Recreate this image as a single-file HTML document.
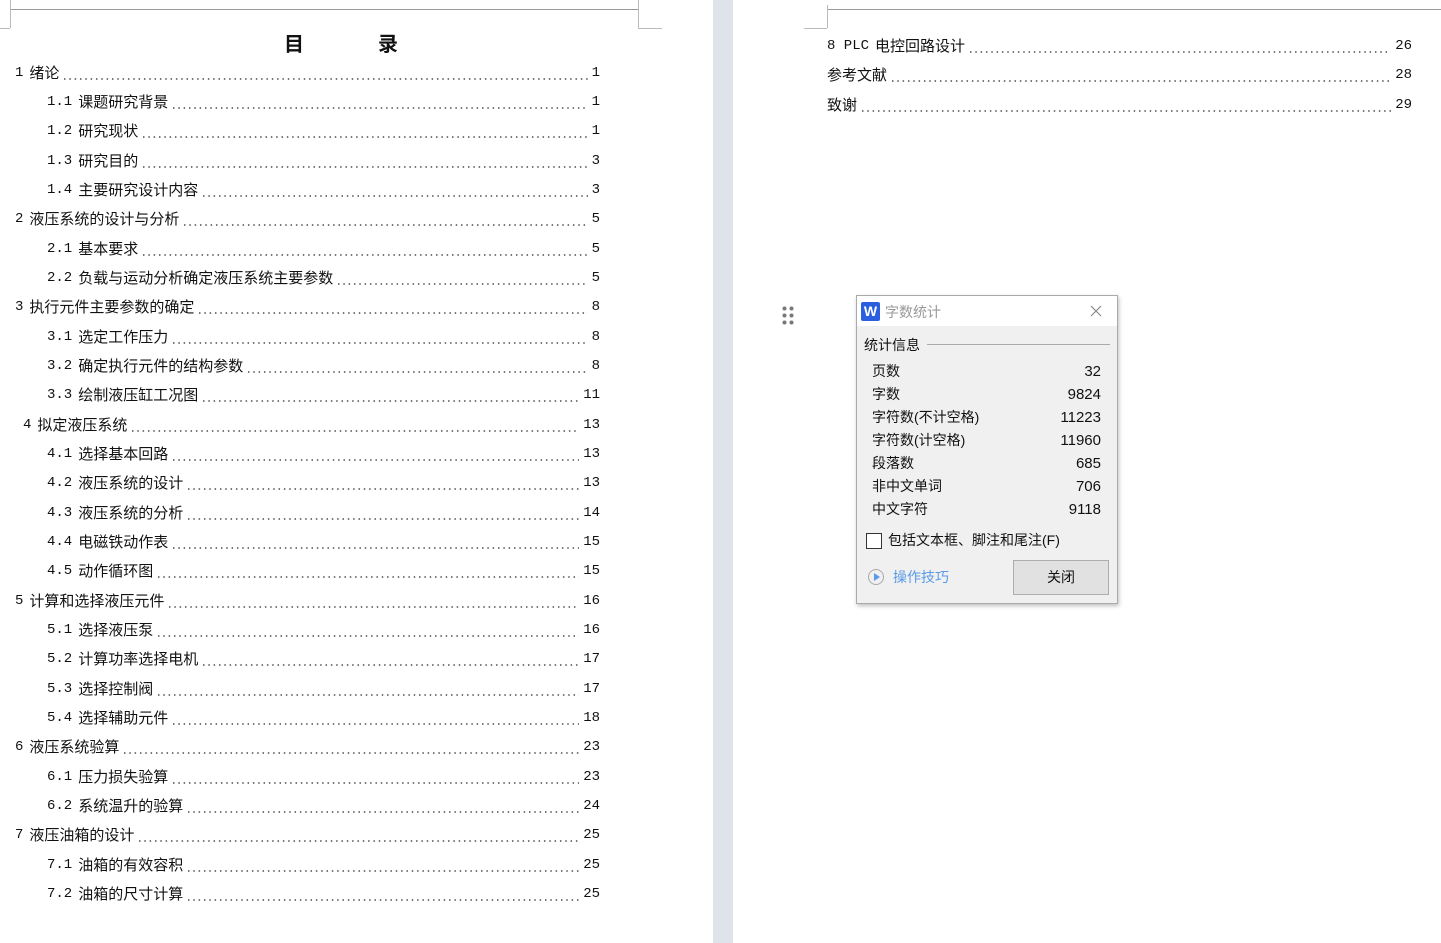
<!DOCTYPE html><html><head><meta charset="utf-8"><style>
body{margin:0;width:1441px;height:943px;background:#fff;position:relative;overflow:hidden;font-family:"Noto Sans CJK SC",sans-serif;font-size:15px;color:#111}
.a{position:absolute}
.r{position:absolute;height:20px;line-height:20px;display:flex}
.r .f{flex:1;height:20px;margin:0 4px;background:linear-gradient(to right,#777 1.6px,transparent 1.6px) 1px 15px/5.33px 1.6px repeat-x}
.r span{white-space:nowrap}
.m{font-family:"Liberation Mono",monospace;font-size:14px}
.n{margin-right:6px}
.d{font-family:"Liberation Sans","Noto Sans CJK SC",sans-serif;font-size:14px}
</style></head><body>
<div class="a" style="left:10px;top:9px;width:628px;height:1px;background:#999"></div>
<div class="a" style="left:10px;top:0;width:1px;height:28px;background:#bbb"></div>
<div class="a" style="left:0;top:28px;width:10px;height:1px;background:#bbb"></div>
<div class="a" style="left:638px;top:0;width:1px;height:28px;background:#bbb"></div>
<div class="a" style="left:638px;top:28px;width:24px;height:1px;background:#bbb"></div>
<div class="a" style="left:713px;top:0;width:20px;height:943px;background:#dfe3ea"></div>
<div class="a" style="left:827px;top:9px;width:614px;height:1px;background:#999"></div>
<div class="a" style="left:827px;top:5px;width:1px;height:23px;background:#bbb"></div>
<div class="a" style="left:804px;top:28px;width:23px;height:1px;background:#bbb"></div>
<div class="a" style="left:284px;top:28px;font-size:20px;font-weight:bold">目</div>
<div class="a" style="left:378px;top:28px;font-size:20px;font-weight:bold">录</div>
<div id="toc"></div>
<script>
var L=[[15,"1 绪论","1"],[47,"1.1 课题研究背景","1"],[47,"1.2 研究现状","1"],[47,"1.3 研究目的","3"],[47,"1.4 主要研究设计内容","3"],[15,"2 液压系统的设计与分析","5"],[47,"2.1 基本要求","5"],[47,"2.2 负载与运动分析确定液压系统主要参数","5"],[15,"3 执行元件主要参数的确定","8"],[47,"3.1 选定工作压力","8"],[47,"3.2 确定执行元件的结构参数","8"],[47,"3.3 绘制液压缸工况图","11"],[23,"4 拟定液压系统","13"],[47,"4.1 选择基本回路","13"],[47,"4.2 液压系统的设计","13"],[47,"4.3 液压系统的分析","14"],[47,"4.4 电磁铁动作表","15"],[47,"4.5 动作循环图","15"],[15,"5 计算和选择液压元件","16"],[47,"5.1 选择液压泵","16"],[47,"5.2 计算功率选择电机","17"],[47,"5.3 选择控制阀","17"],[47,"5.4 选择辅助元件","18"],[15,"6 液压系统验算","23"],[47,"6.1 压力损失验算","23"],[47,"6.2 系统温升的验算","24"],[15,"7 液压油箱的设计","25"],[47,"7.1 油箱的有效容积","25"],[47,"7.2 油箱的尺寸计算","25"]];
var Y=[73,102,131,161,190,219,249,278,307,337,366,395,425,454,483,513,542,571,601,630,659,689,718,747,777,806,835,865,894];
function lab(s){var i=s.indexOf(" ");return '<span class="m n">'+s.slice(0,i)+'</span><span>'+s.slice(i+1)+'</span>';}
var h="";
L.forEach(function(e,i){h+='<div class="r" style="left:'+e[0]+'px;width:'+(600-e[0])+'px;top:'+(Y[i]-10)+'px">'+lab(e[1])+'<div class="f"></div><span class="m">'+e[2]+'</span></div>';});
[["8 PLC 电控回路设计","26",46],["参考文献","28",75],["致谢","29",105]].forEach(function(e){var t=e[0].indexOf(" ")>0?'<span class="m n">8 PLC</span><span>电控回路设计</span>':'<span>'+e[0]+'</span>';h+='<div class="r" style="left:827px;width:585px;top:'+(e[2]-10)+'px">'+t+'<div class="f"></div><span class="m">'+e[1]+'</span></div>';});
document.getElementById("toc").innerHTML=h;
</script>
<svg class="a" style="left:782px;top:306px" width="12" height="20"><g fill="#777"><circle cx="2.5" cy="2.5" r="2"/><circle cx="9.5" cy="2.5" r="2"/><circle cx="2.5" cy="9.5" r="2"/><circle cx="9.5" cy="9.5" r="2"/><circle cx="2.5" cy="16.5" r="2"/><circle cx="9.5" cy="16.5" r="2"/></g></svg>
<div class="a d" style="left:856px;top:295px;width:260px;height:307px;background:#f0f0f0;border:1px solid #aaa;box-shadow:1px 2px 4px rgba(0,0,0,.25)">
<div class="a" style="left:0;top:0;width:260px;height:30px;background:#fff"></div>
<div class="a" style="left:4px;top:6px;width:19px;height:19px;background:#2b5fe0;border-radius:2px;color:#fff;font-weight:bold;font-size:14px;line-height:19px;text-align:center">W</div>
<div class="a" style="left:28px;top:6px;color:#999">字数统计</div>
<svg class="a" style="left:233px;top:9px" width="12" height="12"><path d="M1 1L11 11M11 1L1 11" stroke="#888" stroke-width="1.2"/></svg>
<div class="a" style="left:7px;top:39px">统计信息</div>
<div class="a" style="left:70px;top:48px;width:183px;height:1px;background:#aaa"></div>
<div class="a" style="left:15px;top:64px;line-height:23px">页数<br>字数<br>字符数(不计空格)<br>字符数(计空格)<br>段落数<br>非中文单词<br>中文字符</div>
<div class="a" style="left:150px;width:94px;text-align:right;top:64px;line-height:23px;font-size:15px">32<br>9824<br>11223<br>11960<br>685<br>706<br>9118</div>
<div class="a" style="left:9px;top:237px;width:14px;height:14px;border:1px solid #333;background:#fff"></div>
<div class="a" style="left:31px;top:234px">包括文本框、脚注和尾注(F)</div>
<div class="a" style="left:11px;top:273px;width:14px;height:14px;border:1.5px solid #aaa;border-radius:50%"></div>
<div class="a" style="left:17px;top:277px;width:0;height:0;border-left:6px solid #5a9be8;border-top:4px solid transparent;border-bottom:4px solid transparent"></div>
<div class="a" style="left:36px;top:271px;color:#5a9be8">操作技巧</div>
<div class="a" style="left:156px;top:264px;width:94px;height:33px;background:#e1e1e1;border:1px solid #adadad;text-align:center;line-height:33px">关闭</div>
</div>
</body></html>
